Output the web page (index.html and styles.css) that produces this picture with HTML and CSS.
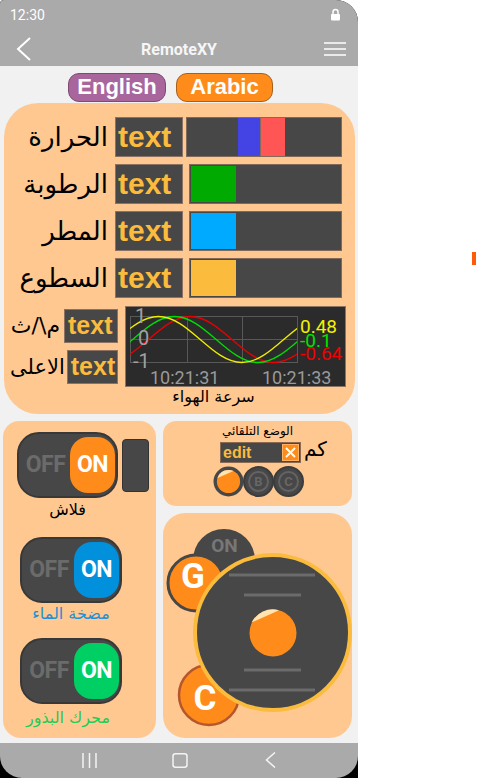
FILE: index.html
```html
<!DOCTYPE html>
<html lang="en">
<head>
<meta charset="utf-8">
<title>RemoteXY</title>
<link rel="stylesheet" href="styles.css">
</head>
<body>
<div class="phone">
  <div class="top">
    <div class="status">
      <span class="clock">12:30</span>
      <svg class="lock" width="11" height="13" viewBox="0 0 11 13"><path d="M3 6.5V4a2.5 2.5 0 0 1 5 0v2.5" fill="none" stroke="#fff" stroke-width="1.5"/><rect x="1" y="6" width="9" height="6.5" rx="1" fill="#fff"/></svg>
    </div>
    <div class="appbar">
      <svg class="back" width="15" height="24" viewBox="0 0 15 24"><path d="M14 1L2 12L14 23" fill="none" stroke="#fff" stroke-width="2"/></svg>
      <div class="title">RemoteXY</div>
      <svg class="menu" width="22" height="14" viewBox="0 0 22 14"><path d="M0 1H22M0 7H22M0 13H22" stroke="#fff" stroke-width="1.6"/></svg>
    </div>
  </div>

  <div class="content">
    <div class="langs">
      <div class="lang en">English</div>
      <div class="lang ar">Arabic</div>
    </div>

    <div class="main">
      <div class="row">
        <div class="lbl" dir="rtl">الحرارة</div>
        <div class="tbox">text</div>
        <div class="bar t"><div class="seg-gap"></div><div class="seg blue"></div><div class="seg-sep"></div><div class="seg red"></div></div>
      </div>
      <div class="row">
        <div class="lbl" dir="rtl">الرطوبة</div>
        <div class="tbox">text</div>
        <div class="bar"><div class="fill green"></div></div>
      </div>
      <div class="row">
        <div class="lbl" dir="rtl">المطر</div>
        <div class="tbox">text</div>
        <div class="bar"><div class="fill sky"></div></div>
      </div>
      <div class="row">
        <div class="lbl" dir="rtl">السطوع</div>
        <div class="tbox">text</div>
        <div class="bar"><div class="fill amber"></div></div>
      </div>

      <div class="lower">
        <div class="lcol">
          <div class="srow"><bdo class="slbl" dir="rtl">م\/ث</bdo><div class="sbox">text</div></div>
          <div class="srow"><div class="slbl s2" dir="rtl">الاعلى</div><div class="sbox">text</div></div>
        </div>
        <div class="ccol">
          <svg class="chart" width="221" height="81" viewBox="0 0 221 81">
            <defs>
              <clipPath id="plot"><rect x="5" y="6" width="167" height="54"/></clipPath>
              <path id="sine" vector-effect="non-scaling-stroke" fill="none" d="M-6.2832 0c0.5123 0.5123 1.0023 1 1.5708 1c0.5685 0 1.0585 -0.4877 1.5708 -1c0.5123 -0.5123 1.0023 -1 1.5708 -1c0.5685 0 1.0585 0.4877 1.5708 1c0.5123 0.5123 1.0023 1 1.5708 1c0.5685 0 1.0585 -0.4877 1.5708 -1c0.5123 -0.5123 1.0023 -1 1.5708 -1c0.5685 0 1.0585 0.4877 1.5708 1c0.5123 0.5123 1.0023 1 1.5708 1c0.5685 0 1.0585 -0.4877 1.5708 -1c0.5123 -0.5123 1.0023 -1 1.5708 -1c0.5685 0 1.0585 0.4877 1.5708 1"/>
            </defs>
            <rect x="0.5" y="0.5" width="220" height="80" fill="#2b2b2b" stroke="#8a7464"/>
            <g stroke="#585858" stroke-width="1" fill="none">
              <rect x="5.5" y="10.5" width="167" height="46"/>
              <path d="M62.5 10.5V56.5M117.5 10.5V56.5M5.5 33.5H172.5"/>
            </g>
            <g clip-path="url(#plot)" stroke-width="1.3">
              <use href="#sine" transform="translate(23.45 33.5) scale(26.58 -23)" stroke="#e80000"/>
              <use href="#sine" transform="translate(7.66 33.5) scale(26.58 -23)" stroke="#00dd00"/>
              <use href="#sine" transform="translate(-8.29 33.5) scale(26.58 -23)" stroke="#eeee00"/>
            </g>
            <text class="ax" x="10" y="17">1</text>
            <text class="ax" x="13" y="39">0</text>
            <text class="ax" x="8" y="62">-1</text>
            <text class="tm" x="25" y="78">10:21:31</text>
            <text class="tm" x="137" y="78">10:21:33</text>
            <text class="val" x="175" y="27" fill="#f2f200">0.48</text>
            <text class="val" x="175" y="41" fill="#00e400">-0.1</text>
            <text class="val" x="175" y="54" fill="#f00000">-0.64</text>
          </svg>
          <div class="ccap" dir="rtl">سرعة الهواء</div>
        </div>
      </div>
    </div>

    <div class="bottom">
      <div class="lp">
        <div class="g1">
          <div class="tg"><span class="off">OFF</span><span class="knob orange">ON</span></div>
          <div class="led"></div>
        </div>
        <div class="cap c1" dir="rtl">فلاش</div>
        <div class="tg t2"><span class="off">OFF</span><span class="knob blue2">ON</span></div>
        <div class="cap c2" dir="rtl">مضخة الماء</div>
        <div class="tg t3"><span class="off">OFF</span><span class="knob green2">ON</span></div>
        <div class="cap c3" dir="rtl">محرك البذور</div>
      </div>

      <div class="rt">
        <div class="rtitle" dir="rtl">الوضع التلقائي</div>
        <div class="erow">
          <div class="ed"><span class="edtxt">edit</span>
            <svg class="clr" width="17" height="17" viewBox="0 0 17 17"><rect x="0.5" y="0.5" width="16" height="16" fill="#ff8c1a" stroke="#ffb264"/><path d="M4 4L13 13M13 4L4 13" stroke="#fff" stroke-width="2"/></svg>
          </div>
          <div class="km" dir="rtl">كم</div>
        </div>
        <div class="radios">
          <svg class="ra" width="31" height="31" viewBox="0 0 31 31"><circle cx="15.5" cy="15.5" r="15" fill="#474747"/><circle cx="15.5" cy="15.5" r="11.6" fill="#ff8c1a"/><path d="M4.5 12A11.6 11.6 0 0 1 20.5 5Z" fill="#ffe3b0"/></svg>
          <div class="rb2"><span class="rin">B</span></div>
          <div class="rb2"><span class="rin">C</span></div>
        </div>
      </div>

      <div class="rbp">
        <svg class="joy" width="189" height="225" viewBox="0 0 189 225">
          <circle cx="61" cy="47" r="31" fill="#474747"/>
          <text class="onl" x="61.5" y="39" text-anchor="middle">ON</text>
          <circle cx="33" cy="70" r="28" fill="#ff8c1a" stroke="#474747" stroke-width="3"/>
          <text class="big" x="30" y="75" text-anchor="middle">G</text>
          <circle cx="46" cy="182" r="30" fill="#ff8c1a" stroke="#b5562c" stroke-width="2.5"/>
          <text class="big" x="42" y="197" text-anchor="middle">C</text>
          <circle cx="109.5" cy="119.5" r="77.5" fill="#474747" stroke="#fbbb3c" stroke-width="4"/>
          <path d="M66 62H152M81 82H138M81 157H138M66 177H152" stroke="#6b6b6b" stroke-width="3"/>
          <circle cx="110" cy="120" r="23.5" fill="#ff8c1a"/>
          <path d="M88.5 109.5A23.5 23.5 0 0 1 116 97.3Z" fill="#ffe3b0"/>
        </svg>
      </div>
    </div>
  </div>

  <div class="nav">
    <svg width="15" height="15" viewBox="0 0 15 15"><path d="M1 0V15M7.5 0V15M14 0V15" stroke="#f4f4f4" stroke-width="1.5"/></svg>
    <svg class="n2" width="16" height="15" viewBox="0 0 16 15"><rect x="1" y="0.75" width="14" height="13.5" rx="2.5" fill="none" stroke="#f4f4f4" stroke-width="1.5"/></svg>
    <svg class="n3" width="11" height="16" viewBox="0 0 11 16"><path d="M10 0.5L1.5 8L10 15.5" fill="none" stroke="#f4f4f4" stroke-width="1.5"/></svg>
  </div>
</div>
<div class="side"><div class="mark"></div></div>
</body>
</html>
```

FILE: styles.css
```css
* { box-sizing: border-box; margin: 0; padding: 0; }
html, body { width: 477px; height: 778px; overflow: hidden; }
body { background: #fff; display: flex; font-family: "Liberation Sans", Arial, sans-serif; }

.phone { width: 358px; height: 778px; flex: none; display: flex; flex-direction: column; background: #000; border-radius: 4px 22px 0 0; overflow: hidden; }
.top { background: #aaaaaa; }
.status { height: 28px; display: flex; align-items: center; justify-content: space-between; padding: 0 17px 0 10px; }
.clock { font: 14px Roboto, sans-serif; color: #fff; padding-top: 1px; }
.lock { display: block; }
.appbar { height: 38px; padding-top: 4px; display: grid; grid-template-columns: 1fr auto 1fr; align-items: center; }
.back { justify-self: start; margin-left: 16px; display: block; }
.title { font: bold 16px Roboto, sans-serif; color: #f6f6f6; }
.menu { justify-self: end; margin-right: 12px; display: block; }

.content { flex: 1; background: #f1f1f1; display: flex; flex-direction: column; }

.langs { display: flex; gap: 10px; padding: 7px 0 0 68px; }
.lang { height: 29px; border-radius: 11px; font: bold 22px/26px "Liberation Sans", Arial, sans-serif; color: #fff; text-align: center; border: 1.5px solid; }
.en { width: 98px; background: #a8669c; border-color: #7c4a72; }
.ar { width: 97px; background: #ff8c1a; border-color: #a8601e; }

.main { height: 311px; margin: 1px 3px 0 4px; background: #ffc891; border-radius: 34px; padding: 14px 0 0 6px; }
.row { display: flex; align-items: center; height: 40px; margin-bottom: 7px; }
.lbl { width: 98px; text-align: right; font: 26px/40px "DejaVu Sans", sans-serif; color: #000; white-space: nowrap; }
.tbox { width: 68px; height: 40px; margin-left: 7px; background: #474747; border: 1px solid #8b7262; color: #fbbb3c; font: bold 30px/37px "Liberation Sans", Arial, sans-serif; padding-left: 2px; }
.bar { height: 40px; width: 153px; margin-left: 6px; border: 1px solid #7f6a5c; background: #474747; padding: 1px; display: flex; }
.bar.t { width: 156px; margin-left: 3px; padding: 0; }
.seg-gap { width: 51px; }
.seg { height: 100%; }
.seg.blue { width: 22px; background: #4444e4; }
.seg-sep { width: 1px; background: #8a6a5a; }
.seg.red { width: 24px; background: #ff5555; }
.fill { width: 45px; height: 100%; }
.green { background: #00aa00; }
.sky { background: #00aaff; }
.amber { background: #fbbb3c; }

.lower { display: flex; padding-top: 1px; }
.lcol { width: 108px; display: flex; flex-direction: column; gap: 7px; padding-top: 3px; }
.srow { display: flex; justify-content: flex-end; align-items: center; height: 34px; }
.slbl { font: 22px/34px "DejaVu Sans", sans-serif; color: #000; margin-right: 4px; white-space: nowrap; }
.slbl.s2 { margin-right: 2px; font-size: 21px; }
.sbox { width: 54px; height: 34px; background: #474747; border: 1px solid #8b7262; color: #fbbb3c; font: bold 25px/30px "Liberation Sans", Arial, sans-serif; padding-left: 3px; }
.ccol { margin-left: 7px; width: 221px; }
.chart { display: block; }
.ax { font: 20px Roboto, sans-serif; fill: #a0a0a0; }
.tm { font: 18px Roboto, sans-serif; fill: #9a9a9a; }
.val { font: 19px Roboto, sans-serif; }
.ccap { width: 177px; text-align: center; font: 16px/19px "DejaVu Sans", sans-serif; color: #000; }

.bottom { display: grid; grid-template-columns: 153px 189px; grid-template-rows: 85px 225px; gap: 7px; margin: 7px 0 0 3px; }
.lp { grid-row: 1 / 3; background: #ffc891; border-radius: 16px 16px 18px 18px; display: flex; flex-direction: column; align-items: flex-start; }
.g1 { display: flex; margin: 11px 0 0 14px; }
.tg { width: 101px; height: 66px; background: #474747; border: 2px solid #383838; border-radius: 22px; display: flex; align-items: stretch; padding: 3px 1px 3px 2px; }
.off { flex: 1; text-align: center; color: #6b6b6b; font: bold 23px/56px Roboto, sans-serif; letter-spacing: -0.5px; }
.knob { width: 45px; border-radius: 18px; color: #fff; font: bold 23px/56px Roboto, sans-serif; text-align: center; letter-spacing: -0.5px; }
.orange { background: #ff8c1a; }
.blue2 { background: #0090dc; }
.green2 { background: #00d063; }
.led { width: 27px; height: 53px; background: #474747; border: 1.5px solid #333; border-radius: 4px; margin: 7px 0 0 4px; }
.cap { font: 16px/20px "DejaVu Sans", sans-serif; text-align: center; white-space: nowrap; }
.c1 { width: 101px; margin: 2px 0 0 14px; color: #000; }
.t2 { width: 102px; margin: 17px 0 0 17px; }
.c2 { width: 102px; margin: 1px 0 0 17px; color: #1e90d6; }
.t3 { width: 102px; margin: 14px 0 0 17px; }
.c3 { width: 96px; margin: 4px 0 0 17px; color: #22cc55; }

.rt { background: #ffc891; border-radius: 13px; display: flex; flex-direction: column; }
.rtitle { text-align: center; font: 12px/16px "DejaVu Sans", sans-serif; color: #000; padding-top: 2px; }
.erow { display: flex; align-items: center; padding-left: 57px; margin-top: 3px; height: 21px; }
.ed { width: 81px; height: 21px; background: #474747; border: 1px solid #8a6a50; display: flex; align-items: center; justify-content: space-between; padding: 0 1px 0 2px; }
.edtxt { font: bold 16px/19px "Liberation Sans", Arial, sans-serif; color: #fbbb3c; }
.clr { display: block; }
.km { font: 20px/21px "DejaVu Sans", sans-serif; color: #000; margin-left: 3px; margin-top: -6px; }
.radios { display: flex; padding-left: 50px; margin-top: 3px; }
.ra { display: block; }
.rb2 { width: 31px; height: 31px; border-radius: 50%; background: #474747; border: 2px solid #3c3c3c; display: flex; align-items: center; justify-content: center; margin-left: -1px; }
.rin { width: 21px; height: 21px; border-radius: 50%; border: 2px solid #636363; color: #666; font: bold 13px/17px Roboto, sans-serif; text-align: center; }

.rbp { background: #ffc891; border-radius: 22px; }
.joy { display: block; }
.onl { font: bold 19px Roboto, sans-serif; fill: #777; }
.big { font: bold 35px Roboto, sans-serif; fill: #fff; }

.nav { height: 35px; flex: none; background: #aaaaaa; border-radius: 0 0 22px 22px; display: flex; align-items: center; padding: 0 0 1px 82px; }
.nav svg { display: block; }
.n2 { margin-left: 75px; }
.n3 { margin-left: 77px; }

.side { flex: 1; display: flex; justify-content: flex-end; align-items: flex-start; padding: 252px 1px 0 0; }
.mark { width: 4px; height: 13px; background: #ff5a0a; }
```
